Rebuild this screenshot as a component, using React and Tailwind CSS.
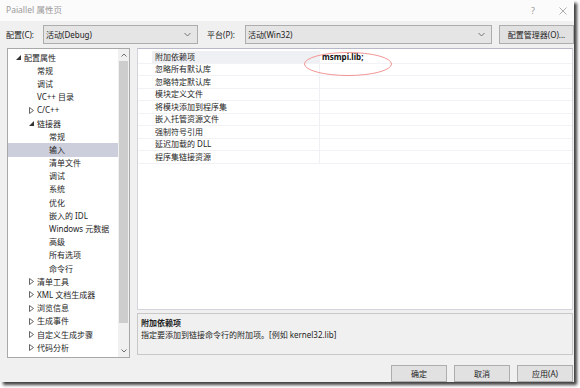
import React from "react";

const FONT = "font-['Noto_Sans','Noto_Sans_CJK_SC',sans-serif]";

function Expanded() {
  return (
    <svg width="5" height="5" viewBox="0 0 5 5" className="block">
      <polygon points="5,0 5,5 0,5" fill="#333" />
    </svg>
  );
}
function Collapsed() {
  return (
    <svg width="5" height="7" viewBox="0 0 5 7" className="block">
      <polygon points="0.5,0.5 4.5,3.5 0.5,6.5" fill="none" stroke="#555" strokeWidth="0.9" />
    </svg>
  );
}

const tree = [
  { t: "配置属性", l: 0, a: "e" },
  { t: "常规", l: 1 },
  { t: "调试", l: 1 },
  { t: "VC++ 目录", l: 1 },
  { t: "C/C++", l: 1, a: "c" },
  { t: "链接器", l: 1, a: "e" },
  { t: "常规", l: 2 },
  { t: "输入", l: 2, sel: true },
  { t: "清单文件", l: 2 },
  { t: "调试", l: 2 },
  { t: "系统", l: 2 },
  { t: "优化", l: 2 },
  { t: "嵌入的 IDL", l: 2 },
  { t: "Windows 元数据", l: 2 },
  { t: "高级", l: 2 },
  { t: "所有选项", l: 2 },
  { t: "命令行", l: 2 },
  { t: "清单工具", l: 1, a: "c" },
  { t: "XML 文档生成器", l: 1, a: "c" },
  { t: "浏览信息", l: 1, a: "c" },
  { t: "生成事件", l: 1, a: "c" },
  { t: "自定义生成步骤", l: 1, a: "c" },
  { t: "代码分析", l: 1, a: "c" },
];

const props = [
  "附加依赖项",
  "忽略所有默认库",
  "忽略特定默认库",
  "模块定义文件",
  "将模块添加到程序集",
  "嵌入托管资源文件",
  "强制符号引用",
  "延迟加载的 DLL",
  "程序集链接资源",
];

function Chevron() {
  return (
    <svg width="7" height="5" viewBox="0 0 7 5" className="block">
      <polyline points="0.5,1 3.5,4 6.5,1" fill="none" stroke="#666" strokeWidth="0.9" />
    </svg>
  );
}

function Combo({ text, w }) {
  return (
    <div className={`h-[19px] ${w} bg-[#e5e5e5] border border-[#adadad] flex items-center pl-[2px] pr-[6px]`}>
      <span className="flex-1 text-[8px] text-[#222]">{text}</span>
      <Chevron />
    </div>
  );
}

function Button({ children, w }) {
  return (
    <div className={`h-[17px] ${w} bg-[#e1e1e1] border border-[#adadad] flex items-center justify-center text-[8px] text-[#222]`}>
      {children}
    </div>
  );
}

export default function App() {
  return (
    <div className={`w-[580px] h-[388px] bg-white overflow-hidden ${FONT}`}>
      <div className="w-[574px] h-[382px] flex flex-col bg-[#f0f0f0] shadow-[3px_3px_3px_rgba(0,0,0,0.75)]">
        {/* title bar */}
        <div className="h-[21px] bg-[#fbfbfb] flex items-center pl-[6px] pr-[7px] text-[#9a9a9a]">
          <span className="flex-1 text-[8.5px] leading-none">Paiallel 属性页</span>
          <span className="text-[9px] leading-none mr-[24px]">?</span>
          <svg width="8" height="8" viewBox="0 0 8 8" className="block">
            <path d="M0.5,0.5 L7.5,7.5 M7.5,0.5 L0.5,7.5" stroke="#999" strokeWidth="0.8" />
          </svg>
        </div>

        {/* toolbar */}
        <div className="mt-[4px] h-[19px] flex items-center pl-[6px]">
          <span className="w-[37px] text-[8px] text-[#222]">配置(C):</span>
          <Combo text="活动(Debug)" w="w-[155px]" />
          <span className="ml-[9px] w-[38px] text-[8px] text-[#222]">平台(P):</span>
          <Combo text="活动(Win32)" w="w-[247px]" />
          <div className="ml-[7px]">
            <Button w="w-[75px] h-[19px]">配置管理器(O)...</Button>
          </div>
        </div>

        {/* main */}
        <div className="mt-[4px] flex pl-[7px]">
          {/* tree */}
          <div className="w-[123px] h-[310px] bg-white border border-[#a8a8a8] flex">
            <div className="flex-1 pt-[2px]">
              {tree.map((it, i) => (
                <div
                  key={i}
                  className={`h-[13.2px] flex items-center text-[8px] leading-none text-[#1e1e1e] ${it.sel ? "bg-[#cccedb]" : ""}`}
                >
                  <div className={`${it.l === 0 ? "w-[16px]" : it.l === 1 ? "w-[29px]" : "w-[41px]"} flex justify-end pr-[3px]`}>
                    {it.a === "e" ? <Expanded /> : it.a === "c" ? <Collapsed /> : null}
                  </div>
                  <span>{it.t}</span>
                </div>
              ))}
            </div>
            <div className="w-[11px] bg-[#f0f0f0] flex flex-col items-center">
              <div className="h-[12px] flex items-center justify-center">
                <svg width="6" height="4" viewBox="0 0 6 4" className="block">
                  <polyline points="0.5,3.5 3,1 5.5,3.5" fill="none" stroke="#606060" strokeWidth="0.9" />
                </svg>
              </div>
              <div className="w-[9px] h-[262px] bg-[#cdcdcd]" />
              <div className="flex-1" />
              <div className="h-[12px] flex items-center justify-center">
                <svg width="6" height="4" viewBox="0 0 6 4" className="block">
                  <polyline points="0.5,0.5 3,3 5.5,0.5" fill="none" stroke="#606060" strokeWidth="0.9" />
                </svg>
              </div>
            </div>
          </div>

          {/* right column */}
          <div className="ml-[7px] w-[436px] flex flex-col">
            <div className="relative h-[262px] bg-white border border-[#d4d4dc] border-t-[#b8b8c8] pt-[2px]">
              {props.map((p, i) => (
                <div key={i} className="h-[12.5px] flex border-b border-[#f2f2f6]">
                  <div className="w-[14px]" />
                  <div className={`w-[168px] flex items-center pl-[3px] text-[8px] leading-none text-[#1e1e1e] border-r border-[#f0f0f4] ${i === 0 ? "bg-[#eff0f3]" : ""}`}>
                    {p}
                  </div>
                  <div className="flex-1 flex items-center pl-[2px] text-[8px] leading-none font-bold text-[#111]">
                    {i === 0 ? "msmpi.lib;" : ""}
                  </div>
                </div>
              ))}
              <svg className="absolute left-[165px] top-[2px]" width="90" height="26" viewBox="0 0 90 26">
                <ellipse cx="45" cy="13" rx="43.5" ry="11.5" fill="none" stroke="#f08a8a" strokeWidth="0.9" />
              </svg>
            </div>
            <div className="mt-[3px] h-[42px] border border-[#c8c8c8] bg-[#f0f0f0] px-[3px] pt-[4px] flex flex-col gap-[3px]">
              <span className="text-[8px] leading-[9px] font-bold text-[#1e1e1e]">附加依赖项</span>
              <span className="text-[8px] leading-[9px] text-[#1e1e1e]">指定要添加到链接命令行的附加项。[例如 kernel32.lib]</span>
            </div>
          </div>
        </div>

        {/* buttons */}
        <div className="mt-[7px] flex justify-end gap-[7px] pr-[1px]">
          <Button w="w-[56px]">确定</Button>
          <Button w="w-[56px]">取消</Button>
          <Button w="w-[56px]">应用(A)</Button>
        </div>
      </div>
    </div>
  );
}
